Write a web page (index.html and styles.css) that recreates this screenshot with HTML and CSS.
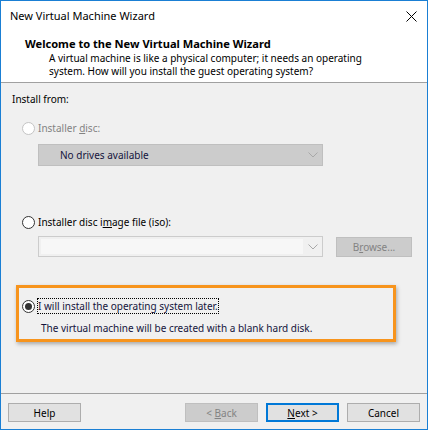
FILE: index.html
```html
<!DOCTYPE html>
<html>
<head>
<meta charset="utf-8">
<link rel="stylesheet" href="styles.css">
</head>
<body>
<div class="window">
  <div class="titlebar">
    <span class="title">New Virtual Machine Wizard</span>
    <svg class="close" width="11" height="11" viewBox="0 0 11 11"><path d="M0.5 0.5L10.5 10.5M10.5 0.5L0.5 10.5" stroke="#000" stroke-width="1" fill="none"/></svg>
  </div>
  <div class="header">
    <div class="heading">Welcome to the New Virtual Machine Wizard</div>
    <div class="desc">A virtual machine is like a physical computer; it needs an operating<br>system. How will you install the guest operating system?</div>
  </div>
  <div class="content">
    <div class="label">Install from:</div>
    <div class="radio-row disabled r1">
      <span class="radio"></span>
      <span class="rtext">Installer <u>d</u>isc:</span>
    </div>
    <div class="select disabled-select">
      <span class="select-text">No drives available</span>
      <svg class="chev" width="10" height="6" viewBox="0 0 10 6"><path d="M0.5 0.5L5 5L9.5 0.5" stroke="#a8a8a8" fill="none"/></svg>
    </div>
    <div class="radio-row r2">
      <span class="radio"></span>
      <span class="rtext">Installer disc i<u>m</u>age file (iso):</span>
    </div>
    <div class="iso-row">
      <div class="combo">
        <div class="combo-inner"></div>
        <svg class="chev" width="10" height="6" viewBox="0 0 10 6"><path d="M0.5 0.5L5 5L9.5 0.5" stroke="#a8a8a8" fill="none"/></svg>
      </div>
      <div class="btn disabled-btn browse"><span>B<u>r</u>owse...</span></div>
    </div>
    <div class="highlight">
      <div class="radio-row r3">
        <span class="radio checked"></span>
        <span class="rtext focus">I will install the operating system later.</span>
      </div>
      <div class="later-desc">The virtual machine will be created with a blank hard disk.</div>
    </div>
  </div>
  <div class="footer">
    <div class="btn"><span>Help</span></div>
    <div class="spacer"></div>
    <div class="btn disabled-btn"><span>&lt; <u>B</u>ack</span></div>
    <div class="btn default"><span><u>N</u>ext &gt;</span></div>
    <div class="btn"><span>Cancel</span></div>
  </div>
</div>
</body>
</html>
```

FILE: styles.css
```css
* { box-sizing: border-box; }
html, body { margin: 0; padding: 0; }
body {
  font-family: "Noto Sans", "Open Sans", sans-serif;
  font-size: 10px;
  color: #000;
  background: #fff;
}
.window {
  width: 428px;
  height: 430px;
  border: 1px solid #1a7fd4;
  display: flex;
  flex-direction: column;
  background: #f0f0f0;
}
.titlebar {
  height: 29px;
  background: #fff;
  display: flex;
  align-items: center;
  padding: 0 10px 0 9px;
  justify-content: space-between;
}
.title { font-size: 11px; line-height: 16px; }
.close { margin-top: 1px; }
.header {
  height: 53px;
  background: #fff;
  border-bottom: 1px solid #a0a0a0;
  padding: 6px 0 0 24px;
}
.heading { font-weight: bold; font-size: 11.1px; line-height: 15px; }
.desc { padding-left: 24px; line-height: 13px; margin-top: 1px; }
.content {
  flex: 1;
  padding: 8px 0 0 11px;
}
.label { line-height: 16px; }
.radio-row {
  display: flex;
  align-items: center;
  height: 16px;
  margin-left: 10px;
}
.radio {
  width: 13px;
  height: 13px;
  border: 1px solid #333;
  border-radius: 50%;
  background: #fff;
  margin-right: 3px;
  position: relative;
  flex: none;
}
.radio.checked::after {
  content: "";
  position: absolute;
  left: 2px; top: 2px;
  width: 7px; height: 7px;
  border-radius: 50%;
  background: #333;
}
.disabled .radio { border-color: #c4c4c4; }
.disabled .rtext { color: #838383; }
.r1 { margin-top: 13px; }
.select {
  margin: 8px 0 0 26px;
  width: 285px;
  height: 22px;
  display: flex;
  align-items: center;
  justify-content: space-between;
  padding: 0 4px 0 21px;
}
.disabled-select { background: #cccccc; border: 1px solid #bfbfbf; }
.select-text { color: #14143c; }
.r2 { margin-top: 48px; }
.iso-row {
  display: flex;
  margin: 6px 0 0 26px;
  align-items: flex-start;
}
.combo {
  width: 285px;
  height: 21px;
  border: 1px solid #cccccc;
  background: #f0f0f0;
  display: flex;
  align-items: center;
  padding: 2px 4px 2px 2px;
  gap: 5px;
}
.combo-inner { flex: 1; height: 100%; background: #f7f7f7; }
.btn {
  width: 73px;
  height: 19px;
  border: 1px solid #adadad;
  background: #e1e1e1;
  display: flex;
  align-items: center;
  justify-content: center;
  line-height: 14px;
}
.disabled-btn { background: #cccccc; border-color: #bfbfbf; color: #838383; }
.browse { width: 76px; height: 20px; margin: 1px 0 0 13px; }
.highlight {
  margin: 28px 0 0 4px;
  width: 380px;
  height: 57px;
  border: 3px solid #f7941d;
  box-shadow: 1px 2px 4px rgba(0,0,0,0.3);
  padding: 10px 0 0 3px;
}
.highlight .radio-row { margin-left: 0; }
.focus {
  outline: 1px dotted #000;
  outline-offset: 0;
  color: #14143c;
  line-height: 14px;
}
.later-desc { margin: 6px 0 0 19px; line-height: 16px; color: #14143c; }
.footer {
  height: 36px;
  border-top: 1px solid #a0a0a0;
  display: flex;
  padding: 9px 7px 0 7px;
  gap: 8px;
}
.spacer { flex: 1; }
.default { border: 2px solid #0078d7; }
u { text-decoration-thickness: 1px; }
```
